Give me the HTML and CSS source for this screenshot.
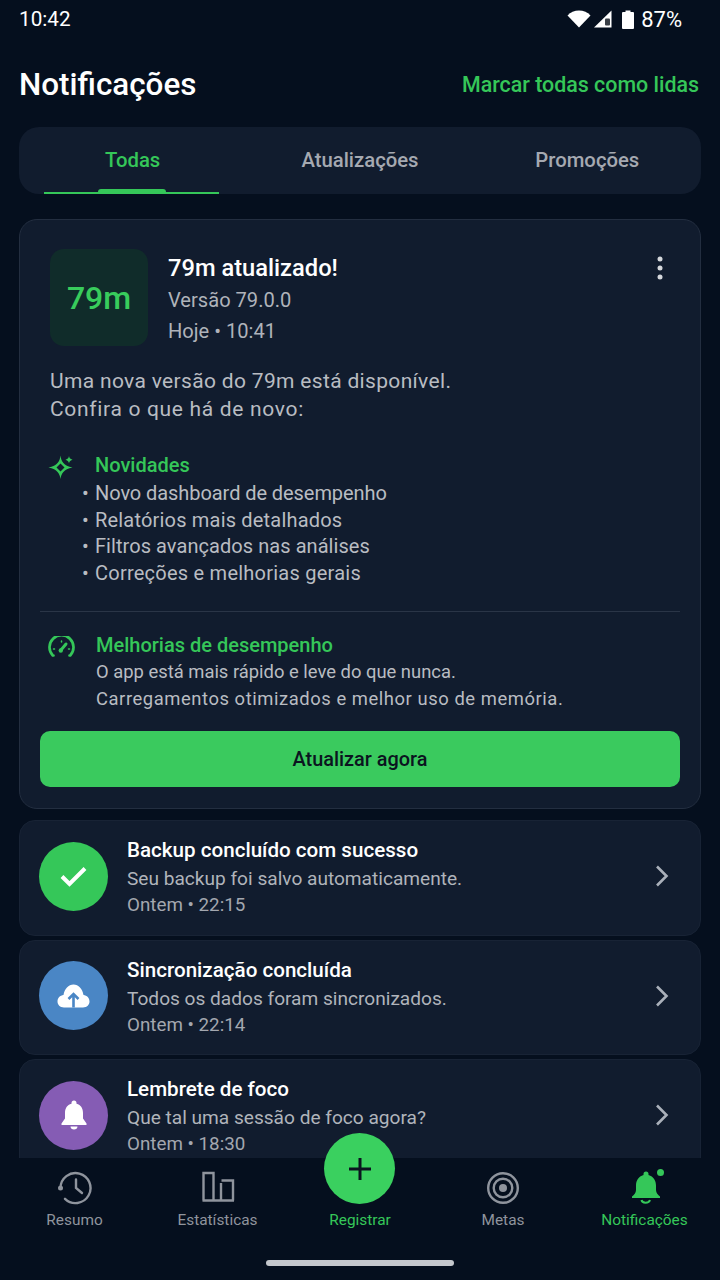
FILE: index.html
```html
<!DOCTYPE html>
<html lang="pt">

<head>
    <meta charset="UTF-8">
    <meta name="viewport" content="width=device-width, initial-scale=1.0">
    <title>Notificações</title>

    <link rel="stylesheet" href="styles.css">
</head>

<body>

    <div class="phone">

        <div class="status-bar">
            <span class="status-time">10:42</span>
            <div class="status-icons">
                <svg class="wifi" width="24" height="18" viewBox="0 0 24 18"><path d="M0.500 5.500C3.500 2.300 7.500 0.500 12 0.500s8.500 1.800 11.500 5L12 17.500z" fill="#fff"/></svg>
                <svg class="signal" width="18" height="18" viewBox="0 0 18 18"><path d="M0 17.500L17.500 0.500V17.500z" fill="#fff"/><rect x="11" y="8.500" width="5" height="7" rx="1" fill="#3a3f47"/></svg>
                <svg class="battery" width="12" height="19" viewBox="0 0 12 19"><path d="M3.500 0.500h5V2h2.500a1 1 0 0 1 1 1V18a1 1 0 0 1-1 1H1a1 1 0 0 1-1-1V3a1 1 0 0 1 1-1H3.500z" fill="#fff"/></svg>
                <span class="status-pct">87%</span>
            </div>
        </div>

        <div class="content">

            <div class="page-head">
                <h1>Notificações</h1>
                <span class="mark-all">Marcar todas como lidas</span>
            </div>

            <div class="tabs">
                <div class="tab active">Todas</div>
                <div class="tab">Atualizações</div>
                <div class="tab">Promoções</div>
            </div>

            <div class="update-card">
                <div class="update-top">
                    <div class="app-badge">79m</div>
                    <div class="update-meta">
                        <h2>79m atualizado!</h2>
                        <p>Versão 79.0.0</p>
                        <p>Hoje • 10:41</p>
                    </div>
                    <svg class="more" width="6" height="24" viewBox="0 0 6 24"><circle cx="3" cy="3" r="2.500"/><circle cx="3" cy="12" r="2.500"/><circle cx="3" cy="21" r="2.500"/></svg>
                </div>

                <p class="update-intro">
                    <span class="intro-first">Uma nova versão do 79m está disponível.</span>
                    <span class="intro-second">Confira o que há de novo:</span>
                </p>

                <div class="section news">
                    <svg class="section-icon" width="26" height="26" viewBox="0 0 26 26" fill="#35c759" fill-rule="evenodd"><path d="M12.500 0.500C13.300 6.500 15.500 10.500 24.500 12.500C15.500 14.500 13.300 18.500 12.500 24C11.700 18.500 9.500 14.500 0.500 12.500C9.500 10.500 11.700 6.500 12.500 0.500zM12.500 8.500L8.500 12.500L12.500 16.500L16.500 12.500z"/><path d="M21 1C21.300 3 22 3.800 24.500 4.700C22 5.600 21.300 6.400 21 8.500C20.700 6.400 20 5.600 17.500 4.700C20 3.800 20.700 3 21 1z"/></svg>
                    <div class="section-body">
                        <h3>Novidades</h3>
                    </div>
                </div>
                <ul class="news-list">
                    <li>Novo dashboard de desempenho</li>
                    <li>Relatórios mais detalhados</li>
                    <li>Filtros avançados nas análises</li>
                    <li>Correções e melhorias gerais</li>
                </ul>

                <div class="divider"></div>

                <div class="section perf">
                    <svg class="section-icon" width="27" height="21" viewBox="0 0 27 21" fill="none" stroke="#35c759" stroke-width="2.700" stroke-linecap="round"><path d="M5.500 19.500H4.800A12 12 0 1 1 22.200 19.500H21.500"/><path d="M13 14L18 8" stroke-width="3"/><circle cx="12.800" cy="14.500" r="2.200" fill="#35c759" stroke="none"/><path d="M13.500 5V6M5.500 13H6.500M20.500 13H21.500" stroke-width="1.500"/></svg>
                    <div class="section-body">
                        <h3>Melhorias de desempenho</h3>
                        <p>O app está mais rápido e leve do que nunca.</p>
                        <p class="perf-second">Carregamentos otimizados e melhor uso de memória.</p>
                    </div>
                </div>

                <div class="update-btn">Atualizar agora</div>
            </div>

            <div class="notif-list">
                <div class="notif">
                    <div class="notif-icon green">
                        <svg width="27" height="21" viewBox="0 0 27 21" fill="none" stroke="#fff" stroke-width="4"><path d="M2 10.500L9.500 18L25 2.500"/></svg>
                    </div>
                    <div class="notif-text">
                        <h4>Backup concluído com sucesso</h4>
                        <p>Seu backup foi salvo automaticamente.</p>
                        <p class="notif-time">Ontem • 22:15</p>
                    </div>
                    <svg class="chevron" width="14" height="22" viewBox="0 0 14 22" fill="none" stroke="#aab0ba" stroke-width="2.600"><path d="M2 1.500L11.500 11L2 20.500"/></svg>
                </div>
                <div class="notif">
                    <div class="notif-icon blue">
                        <svg width="33" height="24" viewBox="0 0 33 24"><path d="M7 23.500C3 23.500 0.500 20.700 0.500 17.500C0.500 14 3 11.300 6.500 11C7.500 5 11.500 0.500 16.500 0.500C21.500 0.500 25.500 5 26.500 11C30 11.300 32.500 14 32.500 17.500C32.500 20.700 30 23.500 26 23.500z" fill="#fff"/><path d="M16.500 23.500V10.500M11.500 15L16.500 10L21.500 15" fill="none" stroke="#4a86c5" stroke-width="2.600"/></svg>
                    </div>
                    <div class="notif-text">
                        <h4>Sincronização concluída</h4>
                        <p>Todos os dados foram sincronizados.</p>
                        <p class="notif-time">Ontem • 22:14</p>
                    </div>
                    <svg class="chevron" width="14" height="22" viewBox="0 0 14 22" fill="none" stroke="#aab0ba" stroke-width="2.600"><path d="M2 1.500L11.500 11L2 20.500"/></svg>
                </div>
                <div class="notif">
                    <div class="notif-icon purple">
                        <svg width="26" height="30" viewBox="0 0 26 30" fill="#fff"><path d="M13 0.500a2.500 2.500 0 0 1 2.500 2.500V3.800C20 5 22 8.500 22 13V18.500L25.500 23.500V25H0.500V23.500L4 18.500V13C4 8.500 6 5 10.500 3.800V3A2.500 2.500 0 0 1 13 0.500z"/><path d="M9.500 26.500H16.500C16.500 28.500 15 29.500 13 29.500S9.500 28.500 9.500 26.500z"/></svg>
                    </div>
                    <div class="notif-text">
                        <h4>Lembrete de foco</h4>
                        <p>Que tal uma sessão de foco agora?</p>
                        <p class="notif-time">Ontem • 18:30</p>
                    </div>
                    <svg class="chevron" width="14" height="22" viewBox="0 0 14 22" fill="none" stroke="#aab0ba" stroke-width="2.600"><path d="M2 1.500L11.500 11L2 20.500"/></svg>
                </div>
            </div>

        </div>

        <div class="bottom-nav">
            <div class="nav-item">
                <svg width="36" height="36" viewBox="0 0 36 36" fill="none" stroke="#8f949d" stroke-width="2.400" stroke-linecap="round"><path d="M3.500 18A15 15 0 1 1 8 28.800"/><path d="M19 9.500V18L25 23"/><circle cx="3.500" cy="18" r="2.500" fill="#8f949d" stroke="none"/></svg>
                <span>Resumo</span>
            </div>
            <div class="nav-item">
                <svg width="36" height="36" viewBox="0 0 36 36" fill="none" stroke="#8f949d" stroke-width="2.400"><path d="M3.500 30.500V3H13.500V30.500M21 30.500V13M21.500 10.500H33V30.500M2.500 30.500H34"/></svg>
                <span>Estatísticas</span>
            </div>
            <div class="nav-item active">
                <div class="nav-spacer"></div>
                <span>Registrar</span>
            </div>
            <div class="nav-item">
                <svg width="36" height="36" viewBox="0 0 36 36" fill="none" stroke="#8f949d" stroke-width="2.400"><circle cx="18" cy="18" r="14.800"/><circle cx="18" cy="18" r="9.300"/><circle cx="18" cy="18" r="4" fill="#8f949d" stroke="none"/></svg>
                <span>Metas</span>
            </div>
            <div class="nav-item active">
                <svg width="36" height="36" viewBox="0 0 36 36" fill="#35c759"><path d="M19 1.500a2.500 2.500 0 0 1 2.500 2.500V5C26.500 6.500 29 10.500 29 15.500V20C29 23 31 25 33 26.500V28H5V26.500C7 25 9 23 9 20V15.500C9 10.500 11.500 6.500 16.500 5V4A2.500 2.500 0 0 1 19 1.500z"/><path d="M14.500 30C15 33.500 22 33.500 23 30" fill="none" stroke="#35c759" stroke-width="2"/></svg>
                <span>Notificações</span>
                <i class="nav-dot"></i>
            </div>

            <div class="fab">
                <svg width="24" height="24" viewBox="0 0 24 24" stroke="#0b1420" stroke-width="3"><path d="M12 1V23M1 12H23"/></svg>
            </div>
            <div class="home-bar"></div>
        </div>

    </div>

</body>

</html>
```

FILE: styles.css
```css
*,
*::before,
*::after {
    margin: 0;
    padding: 0;
    box-sizing: border-box;
}

html,
body {
    background-color: #050f1e;
}

.phone {
    width: 720px;
    height: 1280px;
    overflow: hidden;
    display: flex;
    flex-direction: column;
    background-color: #050f1e;
    font-family: Roboto, "Noto Sans", sans-serif;
    color: #fff;
}

/* status bar */

.status-bar {
    flex: none;
    height: 38px;
    display: flex;
    align-items: center;
    justify-content: space-between;
    padding: 0 38px 0 19px;
}

.status-time {
    font-size: 20.700px;
}

.status-icons {
    display: flex;
    align-items: center;
    font-size: 22px;
}

.signal {
    margin-left: 3px;
}

.battery {
    margin-left: 10px;
}

.status-pct {
    margin-left: 7px;
}

/* scrolling part */

.content {
    flex: 1;
    min-height: 0;
    overflow: hidden;
    padding: 0 19px;
}

.page-head {
    height: 89px;
    display: flex;
    align-items: center;
    justify-content: space-between;
    padding-top: 3px;
    padding-right: 2px;
}

.page-head h1 {
    font-size: 31.400px;
    font-weight: 500;
}

.mark-all {
    font-size: 21.400px;
    font-weight: 500;
    color: #35c759;
}

.tabs {
    position: relative;
    height: 67px;
    display: grid;
    grid-template-columns: repeat(3, 1fr);
    background-color: #111c2e;
    border-radius: 20px;
}

.tab {
    display: flex;
    align-items: center;
    justify-content: center;
    padding-bottom: 1px;
    font-size: 20.300px;
    font-weight: 500;
    color: #a5a9b1;
}

.tab.active {
    position: relative;
    color: #35c759;
}

.tab.active::before {
    content: "";
    position: absolute;
    left: 25px;
    bottom: 0;
    width: 175px;
    height: 2px;
    background-color: #35c759;
}

.tab.active::after {
    content: "";
    position: absolute;
    left: 79px;
    bottom: 0;
    width: 68px;
    height: 5px;
    border-radius: 3px 3px 0 0;
    background-color: #35c759;
}

/* update card */

.update-card {
    margin-top: 25px;
    height: 590px;
    padding: 29px 20px 20px;
    background-color: #111c2e;
    border: 1px solid #232e40;
    border-radius: 18px;
}

.update-top {
    display: flex;
    align-items: flex-start;
    padding-left: 10px;
    padding-right: 17px;
}

.app-badge {
    flex: none;
    width: 98px;
    height: 97px;
    display: flex;
    align-items: center;
    justify-content: center;
    background-color: #102c2a;
    border-radius: 14px;
    font-size: 32px;
    font-weight: 500;
    color: #38cc5c;
}

.update-meta {
    flex: 1;
    margin-left: 20px;
}

.update-meta h2 {
    padding-top: 3px;
    font-size: 23.700px;
    line-height: 33px;
    font-weight: 500;
}

.update-meta p {
    font-size: 20.100px;
    line-height: 31px;
    color: #afb3ba;
}

.more {
    margin-top: 7px;
    fill: #d5d8dc;
}

.update-intro {
    margin-top: 20px;
    padding-left: 10px;
    font-size: 21px;
    line-height: 28px;
    color: #b9bcc2;
}

.intro-first,
.intro-second {
    display: block;
}

.intro-first {
    letter-spacing: 0.33px;
}

.intro-second {
    letter-spacing: 0.68px;
}

.section {
    display: flex;
    align-items: flex-start;
}

.section-icon {
    flex: none;
    margin-left: 8px;
}

.section-body {
    margin-left: 21px;
}

.section-body h3 {
    font-size: 20px;
    line-height: 27px;
    font-weight: 500;
    color: #35c759;
}

.news {
    margin-top: 29px;
}

.news .section-icon {
    margin-top: 3px;
}

.news-list {
    list-style: none;
    padding-left: 42px;
    margin-top: -1px;
    font-size: 20px;
    line-height: 26.500px;
    color: #b9bcc2;
}

.news-list li::before {
    content: "•";
    display: inline-block;
    width: 13px;
}

.news-list li:nth-child(1) {
    letter-spacing: -0.07px;
}

.news-list li:nth-child(2) {
    letter-spacing: 0.19px;
}

.news-list li:nth-child(3) {
    letter-spacing: 0.06px;
}

.news-list li:nth-child(4) {
    letter-spacing: 0.24px;
}

.divider {
    height: 1px;
    margin-top: 25px;
    background-color: #2a3547;
}

.perf {
    margin-top: 20px;
}

.perf .section-icon {
    margin-top: 4px;
}

.perf .section-body {
    margin-left: 21px;
}

.perf .section-body p {
    font-size: 18.400px;
    line-height: 26.500px;
    color: #b9bcc2;
}

.perf .section-body .perf-second {
    letter-spacing: 0.56px;
}

.update-btn {
    margin-top: 19px;
    height: 56px;
    display: flex;
    align-items: center;
    justify-content: center;
    background-color: #3aca5e;
    border-radius: 10px;
    font-size: 19.900px;
    font-weight: 500;
    color: #0b1420;
}

/* other notifications */

.notif-list {
    margin-top: 11px;
    display: flex;
    flex-direction: column;
    gap: 4px;
}

.notif {
    height: 115.500px;
    flex: none;
    display: flex;
    align-items: center;
    padding: 0 31px 3px 19px;
    background-color: #111c2e;
    border: 1px solid #182335;
    border-radius: 16px;
}

.notif-icon {
    flex: none;
    width: 69px;
    height: 69px;
    display: flex;
    align-items: center;
    justify-content: center;
    border-radius: 50%;
}

.notif-icon.green {
    background-color: #35c759;
}

.notif-icon.blue {
    background-color: #4a86c5;
}

.notif-icon.purple {
    background-color: #855cb4;
}

.notif-text {
    flex: 1;
    margin-top: 3px;
    margin-left: 19px;
}

.notif-text h4 {
    margin-bottom: 1px;
    font-size: 20.600px;
    line-height: 28px;
    font-weight: 500;
}

.notif-text p {
    font-size: 19.100px;
    line-height: 27px;
    color: #b0b4bb;
}

.notif-text .notif-time {
    font-size: 18.800px;
    color: #a3a7af;
}

/* bottom nav */

.bottom-nav {
    flex: none;
    position: relative;
    height: 122px;
    display: grid;
    grid-template-columns: 143px 143px 142px 144px 139px;
    padding-left: 3px;
    background-color: #050f1e;
}

.nav-item {
    position: relative;
    display: flex;
    flex-direction: column;
    align-items: center;
    padding-top: 12px;
    font-size: 15.400px;
    color: #8f949d;
}

.nav-item svg {
    flex: none;
}

.nav-item span {
    margin-top: 3px;
    line-height: 22px;
    white-space: nowrap;
}

.nav-item.active {
    color: #35c759;
}

.nav-spacer {
    height: 36px;
}

.nav-dot {
    position: absolute;
    top: 11px;
    left: 82px;
    width: 7px;
    height: 7px;
    border-radius: 50%;
    background-color: #35c759;
}

.fab {
    position: absolute;
    top: -25px;
    left: 324px;
    width: 71px;
    height: 71px;
    display: flex;
    align-items: center;
    justify-content: center;
    border-radius: 50%;
    background-color: #3ad05f;
}

.home-bar {
    position: absolute;
    left: 266px;
    bottom: 14px;
    width: 188px;
    height: 6px;
    border-radius: 3px;
    background-color: #c5c8cd;
}
```
